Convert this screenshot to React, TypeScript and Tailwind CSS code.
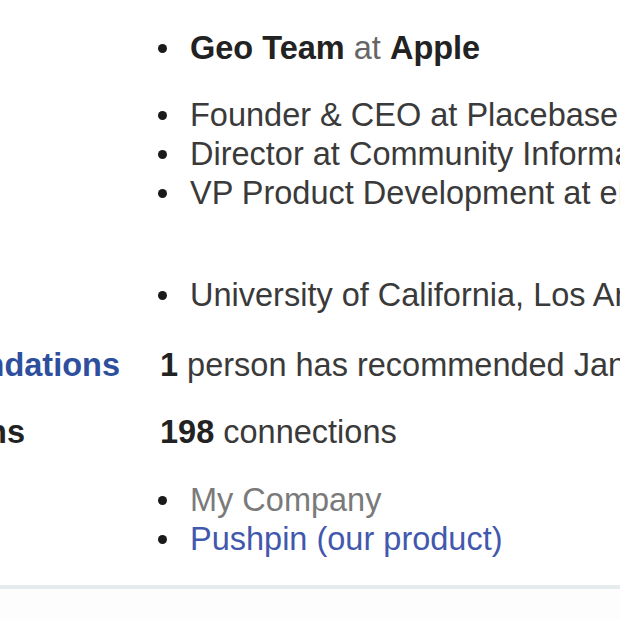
import React from "react";

const Bullet: React.FC<{ children: React.ReactNode }> = ({ children }) => (
  <li className="flex items-center h-[39px]">
    <span className="w-[9px] h-[9px] rounded-full bg-[#1a1a1a] ml-[158px] mr-[23px] shrink-0" />
    <span className="whitespace-nowrap">{children}</span>
  </li>
);

const App: React.FC = () => (
  <div
    className="w-[620px] h-[620px] overflow-hidden bg-white text-[32.5px] leading-[39px] text-[#3a3a3a]"
    style={{ fontFamily: '"Liberation Sans", Arial, sans-serif' }}
  >
    <div className="h-[585px] flex flex-col">
      {/* current */}
      <ul className="mt-[29px]">
        <Bullet>
          <b className="text-[#222]">Geo Team</b> <span className="text-[#666]">at</span>{" "}
          <b className="text-[#222]">Apple</b>
        </Bullet>
      </ul>

      {/* past */}
      <ul className="mt-[28px]">
        <Bullet>Founder &amp; CEO at Placebase</Bullet>
        <Bullet>Director at Community Information</Bullet>
        <Bullet>VP Product Development at eNature</Bullet>
      </ul>

      {/* education */}
      <ul className="mt-[63px]">
        <Bullet>University of California, Los Angeles</Bullet>
      </ul>

      {/* recommendations */}
      <div className="mt-[31px] flex h-[39px] items-center whitespace-nowrap">
        <div className="w-[160px] shrink-0 flex justify-end overflow-hidden">
          <span className="font-bold text-[#2d4f9e] mr-[40px]">Recommendations</span>
        </div>
        <span>
          <b className="text-[#222]">1</b> person has recommended Jane
        </span>
      </div>

      {/* connections */}
      <div className="mt-[28px] flex h-[39px] items-center whitespace-nowrap">
        <div className="w-[160px] shrink-0 flex justify-end overflow-hidden">
          <span className="font-bold text-[#222] mr-[135px]">Connections</span>
        </div>
        <span>
          <b className="text-[#222]">198</b> connections
        </span>
      </div>

      {/* websites */}
      <ul className="mt-[29px]">
        <Bullet>
          <span className="text-[#7a7a7a]">My Company</span>
        </Bullet>
        <Bullet>
          <span className="text-[#4258ad]">Pushpin (our product)</span>
        </Bullet>
      </ul>
    </div>
    <div className="h-[4px] bg-[#e6ecee]" />
    <div className="h-[31px] bg-[#fdfdfd]" />
  </div>
);

export default App;
